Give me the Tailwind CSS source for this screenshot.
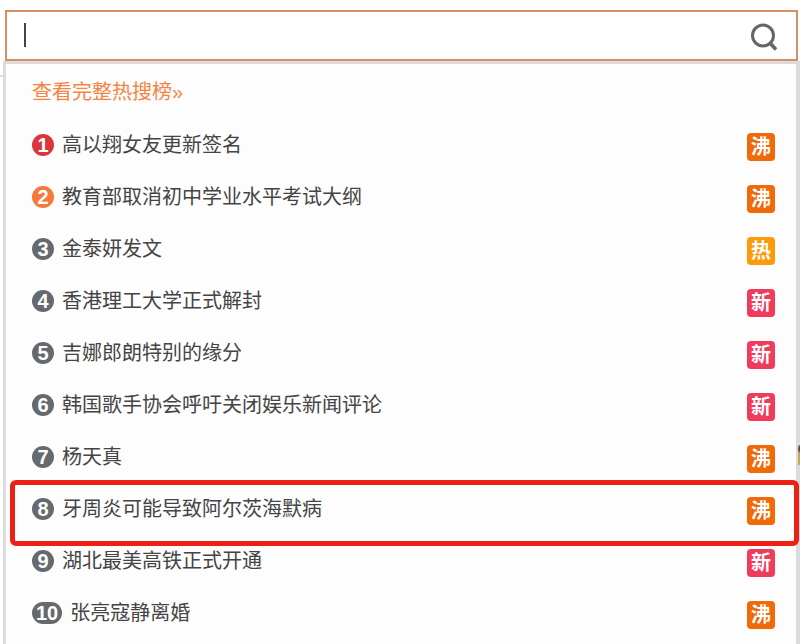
<!DOCTYPE html>
<html lang="zh-CN">
<head>
  <meta charset="UTF-8">
  <meta name="viewport" content="width=device-width, initial-scale=1.0">
  <title>热搜榜</title>
  <script src="https://cdn.jsdelivr.net/npm/@tailwindcss/browser@4"></script>
</head>
<body class="relative h-screen overflow-hidden bg-white font-['Liberation_Sans','Noto_Sans_CJK_SC',sans-serif] text-xl text-[#444]">
  <div class="flex h-full flex-col pt-[10px]">
    <!-- 搜索框 -->
    <form class="mr-[2px] ml-[5px] flex h-[51px] shrink-0 items-center border-2 border-[#d98f5f] bg-white pr-4 pl-4">
      <input type="text" aria-label="搜索" autofocus class="h-8 min-w-0 flex-1 text-2xl caret-transparent outline-none bg-[linear-gradient(#444,#444)] bg-[length:2px_24px] bg-[position:1px_3px] bg-no-repeat">
      <button type="button" aria-label="搜索">
        <svg class="size-[32px]" viewBox="0 0 32 32" fill="none" stroke="#666" stroke-width="3">
          <circle cx="15" cy="15.5" r="10.5"/>
          <path d="M22 23L28 29.5" stroke-width="3.5"/>
        </svg>
      </button>
    </form>

    <!-- 热搜列表 -->
    <div class="ml-[3px] min-h-0 flex-1 border-t-[3px] border-r-4 border-l-[3px] border-[#dcdce0] bg-[#fdfdfd] pt-[9px]">
      <a href="#" class="ml-[26px] flex h-[38px] w-fit items-center text-[#f58440]">查看完整热搜榜»</a>
      <ol class="mt-2">
        <li class="flex h-[52px] items-center pr-[21px] pl-[26px]">
          <span class="flex h-[22px] min-w-[22px] items-center justify-center rounded-full bg-[#d9363e] font-bold text-white">1</span>
          <a href="#" class="ml-2 flex-1">高以翔女友更新签名</a>
          <span class="mt-1 flex size-7 items-center justify-center rounded bg-[#f06a0a] font-bold text-white">沸</span>
        </li>
        <li class="flex h-[52px] items-center pr-[21px] pl-[26px]">
          <span class="flex h-[22px] min-w-[22px] items-center justify-center rounded-full bg-[#f5793a] font-bold text-white">2</span>
          <a href="#" class="ml-2 flex-1">教育部取消初中学业水平考试大纲</a>
          <span class="mt-1 flex size-7 items-center justify-center rounded bg-[#f06a0a] font-bold text-white">沸</span>
        </li>
        <li class="flex h-[52px] items-center pr-[21px] pl-[26px]">
          <span class="flex h-[22px] min-w-[22px] items-center justify-center rounded-full bg-[#666a6e] font-bold text-white">3</span>
          <a href="#" class="ml-2 flex-1">金泰妍发文</a>
          <span class="mt-1 flex size-7 items-center justify-center rounded bg-[#fb9a0c] font-bold text-white">热</span>
        </li>
        <li class="flex h-[52px] items-center pr-[21px] pl-[26px]">
          <span class="flex h-[22px] min-w-[22px] items-center justify-center rounded-full bg-[#666a6e] font-bold text-white">4</span>
          <a href="#" class="ml-2 flex-1">香港理工大学正式解封</a>
          <span class="mt-1 flex size-7 items-center justify-center rounded bg-[#f03c5c] font-bold text-white">新</span>
        </li>
        <li class="flex h-[52px] items-center pr-[21px] pl-[26px]">
          <span class="flex h-[22px] min-w-[22px] items-center justify-center rounded-full bg-[#666a6e] font-bold text-white">5</span>
          <a href="#" class="ml-2 flex-1">吉娜郎朗特别的缘分</a>
          <span class="mt-1 flex size-7 items-center justify-center rounded bg-[#f03c5c] font-bold text-white">新</span>
        </li>
        <li class="flex h-[52px] items-center pr-[21px] pl-[26px]">
          <span class="flex h-[22px] min-w-[22px] items-center justify-center rounded-full bg-[#666a6e] font-bold text-white">6</span>
          <a href="#" class="ml-2 flex-1">韩国歌手协会呼吁关闭娱乐新闻评论</a>
          <span class="mt-1 flex size-7 items-center justify-center rounded bg-[#f03c5c] font-bold text-white">新</span>
        </li>
        <li class="flex h-[52px] items-center pr-[21px] pl-[26px]">
          <span class="flex h-[22px] min-w-[22px] items-center justify-center rounded-full bg-[#666a6e] font-bold text-white">7</span>
          <a href="#" class="ml-2 flex-1">杨天真</a>
          <span class="mt-1 flex size-7 items-center justify-center rounded bg-[#f06a0a] font-bold text-white">沸</span>
        </li>
        <li class="relative flex h-[52px] items-center pr-[21px] pl-[26px]">
          <!-- 红色标注框 -->
          <div class="pointer-events-none absolute -top-[3px] -right-[3px] -bottom-[11px] left-[4px] rounded-md border-5 border-[#ec2015]"></div>
          <span class="flex h-[22px] min-w-[22px] items-center justify-center rounded-full bg-[#666a6e] font-bold text-white">8</span>
          <a href="#" class="ml-2 flex-1">牙周炎可能导致阿尔茨海默病</a>
          <span class="mt-1 flex size-7 items-center justify-center rounded bg-[#f06a0a] font-bold text-white">沸</span>
        </li>
        <li class="flex h-[52px] items-center pr-[21px] pl-[26px]">
          <span class="flex h-[22px] min-w-[22px] items-center justify-center rounded-full bg-[#666a6e] font-bold text-white">9</span>
          <a href="#" class="ml-2 flex-1">湖北最美高铁正式开通</a>
          <span class="mt-1 flex size-7 items-center justify-center rounded bg-[#f03c5c] font-bold text-white">新</span>
        </li>
        <li class="flex h-[52px] items-center pr-[21px] pl-[26px]">
          <span class="flex h-[22px] min-w-[22px] items-center justify-center rounded-full bg-[#666a6e] px-1 font-bold text-white">10</span>
          <a href="#" class="ml-2 flex-1">张亮寇静离婚</a>
          <span class="mt-1 flex size-7 items-center justify-center rounded bg-[#f06a0a] font-bold text-white">沸</span>
        </li>
      </ol>
    </div>
  </div>

  <!-- 面板后面露出的页面边缘 -->
  <div class="absolute top-[75px] left-0 h-[2px] w-1 bg-[#dcdce0]"></div>
  <div class="absolute top-[445px] right-0 h-5 w-[2px] border-t-8 border-dotted border-[#555] bg-[#c9a45c]"></div>
</body>
</html>
